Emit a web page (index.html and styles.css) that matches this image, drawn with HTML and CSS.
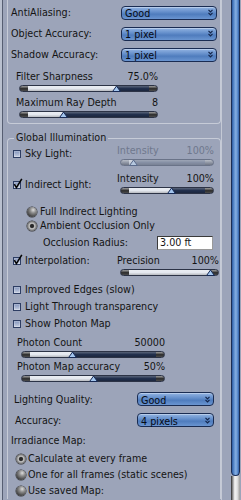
FILE: index.html
```html
<!DOCTYPE html>
<html>
<head>
<meta charset="utf-8">
<link rel="stylesheet" href="styles.css">
</head>
<body>
<div class="window">
  <div class="panel">
    <section class="group group-top">
      <div class="form-row"><span class="lbl">AntiAliasing:</span>
        <div class="select sel-top"><span>Good</span><svg class="chev" width="5" height="7" viewBox="0 0 5 7"><polyline points="0.5,0.8 2.5,2.8 4.5,0.8"/><polyline points="0.5,3.8 2.5,5.8 4.5,3.8"/></svg></div></div>
      <div class="form-row"><span class="lbl">Object Accuracy:</span>
        <div class="select sel-top"><span>1 pixel</span><svg class="chev" width="5" height="7" viewBox="0 0 5 7"><polyline points="0.5,0.8 2.5,2.8 4.5,0.8"/><polyline points="0.5,3.8 2.5,5.8 4.5,3.8"/></svg></div></div>
      <div class="form-row"><span class="lbl">Shadow Accuracy:</span>
        <div class="select sel-top"><span>1 pixel</span><svg class="chev" width="5" height="7" viewBox="0 0 5 7"><polyline points="0.5,0.8 2.5,2.8 4.5,0.8"/><polyline points="0.5,3.8 2.5,5.8 4.5,3.8"/></svg></div></div>

      <div class="slider-block sb-top first">
        <div class="slider-head"><span>Filter Sharpness</span><span>75.0%</span></div>
        <div class="slider" style="--p:70.5%"><svg class="thumb" width="9" height="7" viewBox="0 0 9 7"><path d="M0.6 6.5 L4.5 1 L8.4 6.5 Z"/></svg></div>
      </div>
      <div class="slider-block sb-top">
        <div class="slider-head"><span>Maximum Ray Depth</span><span>8</span></div>
        <div class="slider" style="--p:31.7%"><svg class="thumb" width="9" height="7" viewBox="0 0 9 7"><path d="M0.6 6.5 L4.5 1 L8.4 6.5 Z"/></svg></div>
      </div>
    </section>

    <fieldset class="group gi">
      <legend>Global Illumination</legend>

      <div class="opt-row row-sky">
        <label class="check"><span class="cb"></span>Sky Light:</label>
        <div class="mini off">
          <div class="slider-head"><span>Intensity</span><span>100%</span></div>
          <div class="slider off" style="--p:13.8%"><svg class="thumb" width="9" height="7" viewBox="0 0 9 7"><path d="M0.6 6.5 L4.5 1 L8.4 6.5 Z"/></svg></div>
        </div>
      </div>

      <div class="opt-row row-ind">
        <label class="check"><span class="cb on"><svg class="tick" width="10" height="11" viewBox="0 0 10 11"><path d="M1.3 6.2 L3.4 9.6 L8.8 0.8"/></svg></span>Indirect Light:</label>
        <div class="mini">
          <div class="slider-head"><span>Intensity</span><span>100%</span></div>
          <div class="slider" style="--p:55%"><svg class="thumb" width="9" height="7" viewBox="0 0 9 7"><path d="M0.6 6.5 L4.5 1 L8.4 6.5 Z"/></svg></div>
        </div>
      </div>

      <div class="radios radios-ind">
        <label class="radio-row"><span class="rb"></span>Full Indirect Lighting</label>
        <label class="radio-row"><span class="rb sel"></span>Ambient Occlusion Only</label>
      </div>

      <div class="occ-row">
        <span>Occlusion Radius:</span>
        <span class="field">3.00 ft</span>
      </div>

      <div class="opt-row row-int">
        <label class="check"><span class="cb on"><svg class="tick" width="10" height="11" viewBox="0 0 10 11"><path d="M1.3 6.2 L3.4 9.6 L8.8 0.8"/></svg></span>Interpolation:</label>
        <div class="mini wide">
          <div class="slider-head"><span>Precision</span><span>100%</span></div>
          <div class="slider" style="--p:92%"><svg class="thumb" width="9" height="7" viewBox="0 0 9 7"><path d="M0.6 6.5 L4.5 1 L8.4 6.5 Z"/></svg></div>
        </div>
      </div>

      <div class="checks">
        <label class="check line"><span class="cb"></span>Improved Edges (slow)</label>
        <label class="check line"><span class="cb"></span>Light Through transparency</label>
        <label class="check line"><span class="cb"></span>Show Photon Map</label>
      </div>

      <div class="slider-block sb-photon first">
        <div class="slider-head"><span>Photon Count</span><span>50000</span></div>
        <div class="slider" style="--p:35.4%"><svg class="thumb" width="9" height="7" viewBox="0 0 9 7"><path d="M0.6 6.5 L4.5 1 L8.4 6.5 Z"/></svg></div>
      </div>
      <div class="slider-block sb-photon">
        <div class="slider-head"><span>Photon Map accuracy</span><span>50%</span></div>
        <div class="slider" style="--p:50%"><svg class="thumb" width="9" height="7" viewBox="0 0 9 7"><path d="M0.6 6.5 L4.5 1 L8.4 6.5 Z"/></svg></div>
      </div>

      <div class="form-row q-row first-q"><span class="lbl">Lighting Quality:</span>
        <div class="select sel-gi"><span>Good</span><svg class="chev" width="5" height="7" viewBox="0 0 5 7"><polyline points="0.5,0.8 2.5,2.8 4.5,0.8"/><polyline points="0.5,3.8 2.5,5.8 4.5,3.8"/></svg></div></div>
      <div class="form-row q-row"><span class="lbl acc">Accuracy:</span>
        <div class="select sel-gi"><span>4 pixels</span><svg class="chev" width="5" height="7" viewBox="0 0 5 7"><polyline points="0.5,0.8 2.5,2.8 4.5,0.8"/><polyline points="0.5,3.8 2.5,5.8 4.5,3.8"/></svg></div></div>

      <div class="irr-title">Irradiance Map:</div>
      <div class="radios radios-irr">
        <label class="radio-row"><span class="rb sel"></span>Calculate at every frame</label>
        <label class="radio-row"><span class="rb"></span>One for all frames (static scenes)</label>
        <label class="radio-row"><span class="rb"></span>Use saved Map:</label>
      </div>
    </fieldset>
  </div>
  <div class="gap"></div>
  <div class="scrollbar">
    <div class="sb-thumb"></div>
    <div class="sb-track"></div>
  </div>
</div>
</body>
</html>
```

FILE: styles.css
```css
html, body {
  margin: 0;
  padding: 0;
}
body {
  width: 241px;
  height: 500px;
  overflow: hidden;
  background: #9ca4b9;
  font-family: "DejaVu Sans", sans-serif;
  font-size: 9.6px;
  color: #141414;
}
.window {
  display: flex;
  height: 500px;
}
.panel {
  width: 222px;
  box-sizing: border-box;
  border-left: 2px solid #b9c0cf;
  border-right: 1px solid #c4c9d5;
  box-shadow: inset 1px 0 #565e72;
  padding-left: 5px;
  display: flex;
  flex-direction: column;
}
.gap {
  width: 9px;
}
.scrollbar {
  width: 10px;
  display: flex;
  flex-direction: column;
}
.sb-thumb {
  height: 476px;
  box-sizing: border-box;
  margin-right: 1px;
  border: 1px solid #1b2d54;
  border-top: none;
  border-radius: 0 0 5px 5px;
  background: linear-gradient(to right, #2c5ba2, #5f8fcf 30%, #86afe3 55%, #5a8acb 80%, #2f5ea6);
}
.sb-track {
  flex: 1;
  margin-right: 1px;
  border-left: 1px solid #444;
  background: linear-gradient(to right, #6a6a6a, #f4f4f4 35%, #e2e2e2 65%, #9a9a9a);
}

/* group boxes */
.group {
  width: 214px;
  box-sizing: border-box;
  border: 1px solid #c6cbd7;
  border-radius: 4px;
}
.group-top {
  border-top: none;
  border-radius: 0 0 4px 4px;
  padding: 2px 3px 0 2px;
}
.form-row {
  display: flex;
  align-items: center;
  justify-content: space-between;
  height: 21px;
}
.lbl {
  padding-left: 1px;
}
.select {
  display: flex;
  align-items: center;
  justify-content: space-between;
  box-sizing: border-box;
  height: 14px;
  border: 1px solid #1a2c52;
  border-radius: 4px;
  padding: 2px 3px 0 3px;
  background: linear-gradient(#93b4e2, #6690cc 40%, #4f7cbd 60%, #6a95d1);
  box-shadow: inset 0 1px rgba(255,255,255,0.35);
  color: #050a14;
  line-height: 11px;
}
.select .chev { margin-top: -2px; }
.sel-top { width: 96px; }
.chev {
  fill: none;
  stroke: #13254a;
  stroke-width: 1.2;
}

/* sliders */
.slider-head {
  display: flex;
  justify-content: space-between;
  height: 12px;
  line-height: 12px;
}
.slider {
  --p: 50%;
  position: relative;
  height: 7px;
  box-sizing: border-box;
  margin-top: 2px;
  border: 1px solid #2c3346;
  border-radius: 4px;
  background:
    linear-gradient(rgba(255,255,255,0.25), rgba(255,255,255,0) 50%, rgba(0,0,0,0.2)),
    linear-gradient(#7a7a7a, #2b2b2b 55%, #5e5e5e) left / 8px 100% no-repeat,
    linear-gradient(#7a7a7a, #2b2b2b 55%, #5e5e5e) right / 8px 100% no-repeat,
    linear-gradient(to right, #e4e8ef var(--p), #22304d var(--p));
}
.thumb {
  position: absolute;
  left: calc(var(--p) - 4.5px);
  bottom: -1px;
  fill: #a4c6ee;
  stroke: #172a55;
  stroke-width: 1;
}
.slider.off {
  border-color: #6a7388;
  background:
    linear-gradient(rgba(255,255,255,0.2), rgba(255,255,255,0) 50%, rgba(0,0,0,0.1)),
    linear-gradient(#a6acb8, #7e8595) left / 8px 100% no-repeat,
    linear-gradient(#a6acb8, #7e8595) right / 8px 100% no-repeat,
    linear-gradient(to right, #c6ccd7 var(--p), #8690a5 var(--p));
}
.slider.off .thumb {
  fill: #b6c8df;
  stroke: #5a6a8a;
}
.sb-top {
  width: 142px;
  margin-left: 6px;
  padding-bottom: 5px;
}
.sb-top.first { margin-top: 6px; }
.sb-top .slider { margin-left: 3px; }

/* fieldset */
.gi {
  margin: 8px 0 0 0;
  padding: 0;
  min-width: 0;
  border-bottom: none;
  border-radius: 4px 4px 0 0;
}
.gi legend {
  margin-left: 6px;
  padding: 0 2px;
  line-height: 12px;
}
.opt-row {
  display: flex;
  justify-content: space-between;
  align-items: flex-start;
}
.check {
  display: flex;
  align-items: center;
  gap: 4px;
  padding-left: 5px;
  line-height: 12px;
}
.cb {
  position: relative;
  width: 8px;
  height: 8px;
  box-sizing: border-box;
  border: 1px solid #2d3d63;
  background: linear-gradient(#8193bb, #c8d0e2);
  box-shadow: inset 0 0 0 1px rgba(255,255,255,0.25);
  flex: none;
}
.tick {
  position: absolute;
  left: -1px;
  top: -4px;
  fill: none;
  stroke: #050505;
  stroke-width: 1.6;
}
.mini {
  width: 97px;
  margin-right: 6px;
}
.mini .slider { margin-left: 3px; }
.mini.off .slider-head { color: #6f788d; }
.mini.wide { width: 102px; margin-right: 1px; }
.row-sky { margin-top: 1px; }
.row-sky .check { margin-top: 3px; }
.row-ind { margin-top: 7px; }
.row-ind .check { margin-top: 6px; }
.row-int { margin-top: 5px; }
.row-int .check { margin-top: 0; }

.radios-ind {
  margin-top: 11px;
  padding-left: 19px;
}
.radio-row {
  display: flex;
  align-items: center;
  gap: 3px;
  height: 14px;
  line-height: 12px;
}
.rb {
  width: 10px;
  height: 10px;
  border-radius: 50%;
  flex: none;
  background: radial-gradient(circle at 62% 30%, #dcdcdc 0, #8c8c8c 32%, #454545 70%, #1c1c1c 100%);
  box-shadow: 0 0 0 0.5px #333;
}
.rb.sel {
  background: radial-gradient(circle at 50% 50%, #1e1e1e 0, #333 24%, #c8c8c8 38%, #7a7a7a 62%, #262626 100%);
}
.occ-row {
  display: flex;
  align-items: center;
  justify-content: space-between;
  height: 14px;
  margin-top: 3px;
  padding-left: 35px;
  padding-right: 7px;
  line-height: 12px;
}
.field {
  width: 56px;
  height: 14px;
  box-sizing: border-box;
  background: #fff;
  border: 1px solid #3a3a3a;
  border-right-color: #9a9a9a;
  border-bottom-color: #9a9a9a;
  padding-left: 2px;
  line-height: 12px;
}
.checks {
  margin-top: 5px;
}
.check.line {
  height: 17px;
}
.sb-photon {
  width: 148px;
  margin-left: 9px;
  padding-bottom: 3px;
}
.sb-photon.first { margin-top: 5px; }
.sb-photon .slider { margin-left: 4px; }
.q-row {
  height: 14px;
  margin-top: 7px;
  padding-left: 5px;
  padding-right: 6px;
}
.q-row.first-q { margin-top: 7px; }
.lbl.acc { padding-left: 2px; }
.sel-gi { width: 77px; }
.irr-title {
  margin-top: 8px;
  padding-left: 3px;
  line-height: 12px;
}
.radios-irr {
  margin-top: 4px;
  padding-left: 8px;
}
.radios-irr .radio-row {
  height: 16px;
  gap: 2px;
}
```
